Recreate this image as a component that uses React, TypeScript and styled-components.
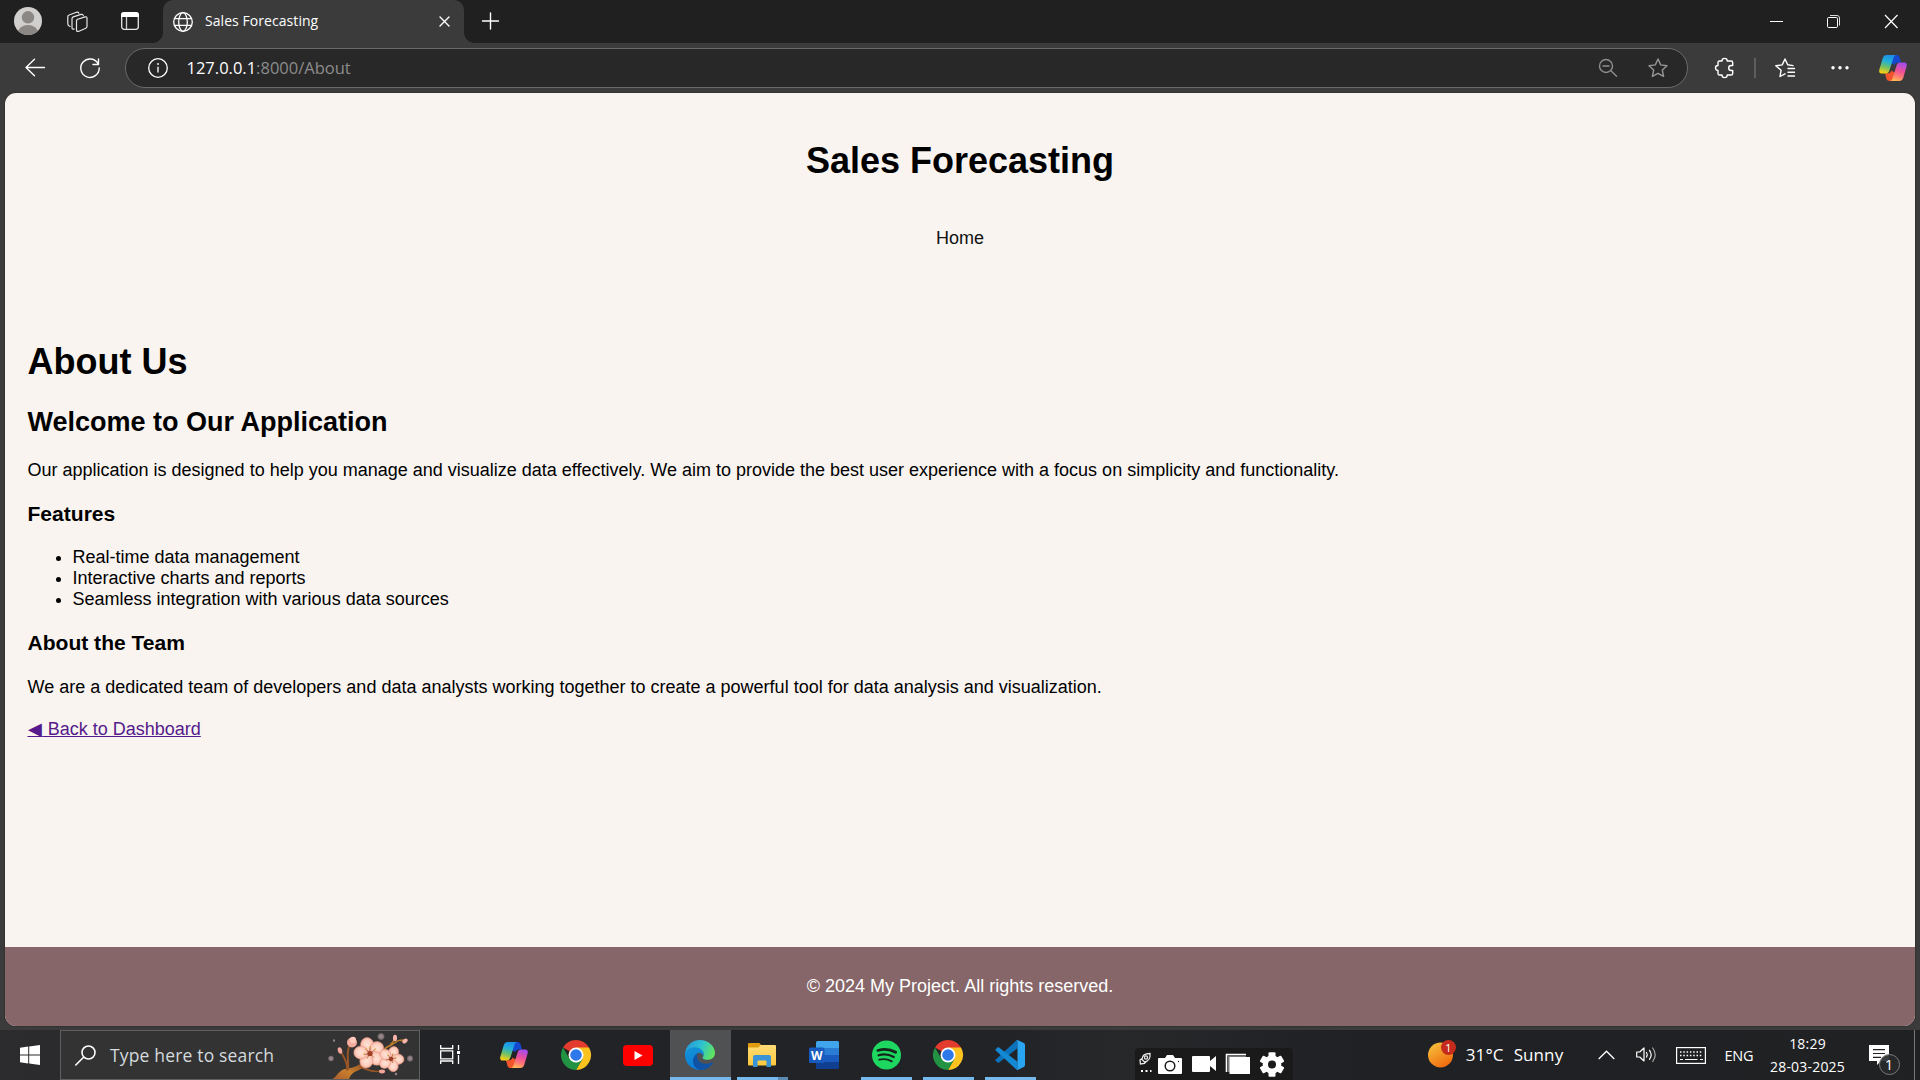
import React from 'react';
import styled, { createGlobalStyle } from 'styled-components';

const GlobalStyle = createGlobalStyle`
  html, body { margin: 0; padding: 0; }
  body { overflow: hidden; background: #3b3b3b; }
  * { box-sizing: border-box; }
`;

const uiFont = '"Open Sans", "Noto Sans", sans-serif';
const pageFont = '"Liberation Sans", Arial, sans-serif';

const Screen = styled.div`
  width: 1920px;
  height: 1080px;
  display: flex;
  flex-direction: column;
  background: #3b3b3b;
  font-family: ${uiFont};
`;

const Svg = styled.svg`
  display: block;
  flex: none;
  overflow: visible;
`;

/* ---------- browser title bar ---------- */

const TitleBar = styled.div`
  height: 43px;
  flex: none;
  display: flex;
  background: #202020;
`;

const TitleTools = styled.div`
  width: 163px;
  display: flex;
  padding: 7px 0 0 14px;
`;

const TitleTool = styled.div<{ $w: number }>`
  width: ${p => p.$w}px;
  flex: none;
`;

const Tab = styled.div`
  position: relative;
  width: 301px;
  display: flex;
  align-items: flex-start;
  padding: 11px 14px 0 10px;
  border-radius: 10px 10px 0 0;
  background: #3b3b3b;
  color: #fff;

  &::before, &::after {
    content: '';
    position: absolute;
    bottom: 0;
    width: 10px;
    height: 10px;
  }
  &::before {
    left: -10px;
    background: radial-gradient(circle at 0 0, transparent 9.5px, #3b3b3b 10px);
  }
  &::after {
    right: -10px;
    background: radial-gradient(circle at 100% 0, transparent 9.5px, #3b3b3b 10px);
  }
`;

const TabTitle = styled.span`
  flex: 1;
  margin: 0 0 0 12px;
  font-size: 14px;
  line-height: 20px;
  letter-spacing: 0.06px;
  white-space: nowrap;
`;

const TabClose = styled.div`
  padding-top: 5px;
`;

const NewTab = styled.div`
  padding: 13px 0 0 18px;
`;

const WindowControls = styled.div`
  margin-left: auto;
  width: 150px;
  display: flex;
  padding-top: 15px;
`;

const WindowControl = styled.div`
  width: 57px;
  flex: none;
`;

/* ---------- browser toolbar ---------- */

const Toolbar = styled.div`
  height: 50px;
  flex: none;
  display: flex;
  align-items: flex-start;
  padding-top: 5px;
  background: #3b3b3b;
`;

const NavButtons = styled.div`
  width: 125px;
  height: 40px;
  display: flex;
  gap: 35px;
  align-items: center;
  padding-left: 25px;
`;

const AddressBar = styled.div`
  width: 1563px;
  height: 40px;
  display: flex;
  align-items: center;
  padding: 0 19px 0 22px;
  border: 1px solid #6a6a6a;
  border-radius: 20px;
  background: #282828;
`;

const Url = styled.span`
  flex: 1;
  margin: -1px 0 0 18.5px;
  font-size: 16.5px;
  line-height: 24px;
  color: #8c8c8c;
  b { font-weight: 400; color: #fff; }
`;

const AddressIcons = styled.div`
  display: flex;
  gap: 30px;
`;

const ToolbarIcons = styled.div`
  flex: 1;
  height: 40px;
  display: flex;
  align-items: center;
  padding-left: 27px;
`;

const Divider = styled.div`
  width: 2px;
  height: 20px;
  margin: 0 19px;
  background: #5e5e5e;
`;

const MoreMenu = styled.div`
  margin: 0 30px 0 36px;
`;

/* ---------- web page ---------- */

const Page = styled.div`
  height: 933px;
  flex: none;
  margin: 0 5px 4px;
  display: flex;
  flex-direction: column;
  border-radius: 11px;
  overflow: hidden;
  background: #f9f4f0;
  color: #000;
  font-family: ${pageFont};
  font-size: 18px;
  line-height: normal;
  box-shadow: 0 0 1px 1px #333;
`;

const PageHeader = styled.header`
  padding: 22.5px;
  text-align: center;
  h1 { font-size: 36px; margin: 0.67em 0; }
`;

const HomeLink = styled.a`
  display: block;
  padding: 22.5px 0;
  color: #111;
`;

const Content = styled.main`
  flex: 1;
  padding: 22.5px;

  h1 { font-size: 36px; margin: 0.67em 0; }
  h2 { font-size: 27px; margin: 0.83em 0; }
  h3 { font-size: 21.06px; margin: 1em 0; }
  p { margin: 1em 0; }
  ul { margin: 1em 0; padding-left: 45px; }
`;

const BackLink = styled.a`
  display: inline-block;
  margin-top: 2px;
  line-height: 23px;
  color: #551a8b;
  text-decoration: underline;
`;

const BackArrow = styled.span`
  letter-spacing: 1.2px;
`;

const PageFooter = styled.footer`
  height: 79px;
  flex: none;
  padding: 11px;
  background: #866668;
  color: #fff;
  text-align: center;
  p { margin: 18px 0; }
`;

/* ---------- taskbar ---------- */

const Taskbar = styled.div`
  height: 50px;
  flex: none;
  display: flex;
  background: linear-gradient(90deg, #2c2c2e 0, #212326 420px, #212326 1000px, #27282a 1120px, #202124 1350px, #202123 100%);
  color: #fff;
`;

const StartButton = styled.div`
  width: 60px;
  padding: 15px 20px;
`;

const SearchBox = styled.div`
  width: 360px;
  height: 50px;
  flex: none;
  display: flex;
  padding-left: 14px;
  border: 1px solid #5f5f5f;
  background: #333;
  overflow: hidden;
`;

const SearchIcon = styled.div`
  padding-top: 14px;
`;

const SearchText = styled.span`
  width: 172px;
  flex: none;
  margin: 11px 0 0 14px;
  font-size: 17.5px;
  line-height: 26px;
  letter-spacing: 0.17px;
  color: #d4dade;
  white-space: nowrap;
`;

const Blossom = styled.div`
  flex: none;
  margin: -3px 0 0 40px;
`;

const TaskView = styled.div`
  width: 64px;
  padding: 15px 0 0 20px;
`;

const AppList = styled.div`
  display: flex;
`;

const AppSlot = styled.div<{ $active?: boolean }>`
  width: 62px;
  height: 50px;
  display: flex;
  flex-direction: column;
  align-items: center;
  background: linear-gradient(${p => (p.$active ? '#505153, #505153' : 'transparent, transparent')}) 0 0 / 61px 100% no-repeat;
`;

const AppIcon = styled.div`
  height: 47px;
  display: flex;
  align-items: center;
  padding: 3px 1px 0 0;
`;

const RunBar = styled.div<{ $w: number; $stack?: boolean }>`
  width: ${p => p.$w}px;
  height: 3px;
  margin-right: 1px;
  border-right: ${p => (p.$stack ? '10px solid #5b8bb3' : '0')};
  background: #76b9ed;
`;

const CaptureTools = styled.div`
  width: 158px;
  height: 32px;
  margin: 18px 0 0 93px;
  border-radius: 4px 4px 0 0;
  background: #1a1a1b;
`;

const Weather = styled.div`
  margin-left: 135px;
  width: 171px;
  display: flex;
  padding-top: 10px;
`;

const WeatherText = styled.span<{ $gap: number }>`
  margin: 2px 0 0 ${p => p.$gap}px;
  font-size: 17px;
  line-height: 26px;
  letter-spacing: 0.1px;
`;

const Tray = styled.div`
  display: flex;
  height: 50px;
`;

const TrayItem = styled.div<{ $w: number; $top: number }>`
  width: ${p => p.$w}px;
  padding-top: ${p => p.$top}px;
`;

const Language = styled(TrayItem)`
  font-size: 14.5px;
  line-height: 20px;
  letter-spacing: -0.2px;
`;

const Clock = styled.div`
  width: 77px;
  padding-top: 2px;
  text-align: center;
  font-size: 14px;
  line-height: 23px;
  letter-spacing: 0.2px;
  white-space: nowrap;
`;

const Notifications = styled.div`
  margin-left: 23px;
  padding-top: 15px;
  position: relative;
  width: 45px;
`;

const NotificationCount = styled.div`
  position: absolute;
  left: 9.5px;
  top: 24px;
  width: 21px;
  height: 21px;
  border: 1px solid #7b7b7b;
  border-radius: 50%;
  background: rgba(40, 41, 43, 0.9);
  font-size: 15px;
  line-height: 19px;
  text-align: center;
`;

const ShowDesktop = styled.div`
  width: 6px;
  border-left: 1px solid #77797a;
`;

const WeatherBadge = styled.div`
  position: absolute;
  left: 13px;
  top: 0;
  width: 15px;
  height: 15px;
  border-radius: 50%;
  background: #c42b1c;
  font-size: 11.5px;
  line-height: 15px;
  text-align: center;
`;

const WeatherIcon = styled.div`
  position: relative;
  width: 28px;
`;

/* ---------- drawings ---------- */

const line = { fill: 'none', stroke: '#fff', strokeWidth: 1.4, strokeLinecap: 'round' as const, strokeLinejoin: 'round' as const };

const Copilot = ({ id }: { id: string }) => (
  <Svg width="28" height="26" viewBox="0 0 28 26">
    <defs>
      <linearGradient id={`${id}l`} x1="0.6" y1="0" x2="0.35" y2="1">
        <stop offset="0" stopColor="#1b8fe8" /><stop offset="0.35" stopColor="#22b0d8" />
        <stop offset="0.65" stopColor="#6cc06a" /><stop offset="1" stopColor="#ffd011" />
      </linearGradient>
      <linearGradient id={`${id}r`} x1="0.7" y1="0" x2="0.4" y2="1">
        <stop offset="0" stopColor="#a24cf0" /><stop offset="0.45" stopColor="#ee5098" />
        <stop offset="0.75" stopColor="#ff7c72" /><stop offset="1" stopColor="#ffb657" />
      </linearGradient>
    </defs>
    <path d="M13 0h4.500c1.800 0 2.700 1 3.200 2.800L22 7.500h-3c-2 0-3 1-3.600 2.600L12 8z" fill="#1448cf" />
    <path d="M15 26h-4.500c-1.800 0-2.700-1-3.200-2.800L6 18.200h3c2 0 3-1 3.600-2.600L16 18z" fill="#f2552c" />
    <path d="M7.800 0h9c-1.300.5-1.900 1.500-2.400 3l-4 12.600c-.7 2-1.600 2.900-3.600 2.900H2.500C.5 18.500-.2 16.700.3 14.700L3.800 3C4.500 1 5.800 0 7.800 0z" fill={`url(#${id}l)`} />
    <path d="M20.200 26h-9c1.300-.5 1.900-1.500 2.400-3l4-12.600c.7-2 1.600-2.900 3.600-2.900h4.300c2 0 2.700 1.800 2.200 3.800L24.200 23c-.7 2-2 3-4 3z" fill={`url(#${id}r)`} />
  </Svg>
);

const Chrome = () => (
  <Svg width="30" height="30" viewBox="0 0 48 48">
    <path d="M24 24L3.200 12A24 24 0 0 1 44.800 12z" fill="#e33b2e" />
    <path d="M24 12h20.800A24 24 0 0 1 24 48l10.400-18z" fill="#fcc31e" />
    <path d="M3.200 12A24 24 0 0 0 24 48l10.400-18H13.600z" fill="#229342" />
    <circle cx="24" cy="24" r="12" fill="#fff" />
    <circle cx="24" cy="24" r="9.300" fill="#2f78ea" />
  </Svg>
);

const Youtube = () => (
  <Svg width="30" height="21" viewBox="0 0 30 21">
    <rect width="30" height="21" rx="4" fill="#f00" />
    <path d="M11.500 6v9l8-4.500z" fill="#fff" />
  </Svg>
);

const Edge = () => (
  <Svg width="30" height="30" viewBox="0 0 30 30">
    <defs>
      <linearGradient id="edgeTop" x1="0" y1="0.3" x2="1" y2="0.6">
        <stop offset="0" stopColor="#2698dc" /><stop offset="0.5" stopColor="#2fc2cf" /><stop offset="1" stopColor="#62e65a" />
      </linearGradient>
      <linearGradient id="edgeSide" x1="0" y1="0" x2="0.4" y2="1">
        <stop offset="0" stopColor="#1596d6" /><stop offset="1" stopColor="#0b7bd6" />
      </linearGradient>
    </defs>
    <path d="M0 14C.5 6 6.800 0 15 0s15 6.200 15 12.800c0 4.400-3.400 7-7.400 7-3 0-5-1-5-2.100 0-1 1-1.300 1-3.500 0-2.800-3-5-7-5C6.800 9.200 2.500 11 0 14z" fill="url(#edgeTop)" />
    <path d="M0 15c0-4.500 4.500-7.800 9.800-7.800 5 0 8.800 3 8.800 6.600 0 .8-.2 1.500-.6 2.100-.8-2.200-2.300-3.200-3.700-3.200-2.300 0-4.300 2.500-4.300 6.300 0 5 3.600 9.500 8 10.500-1 .3-2 .5-3 .5C6.700 30 0 23.300 0 15z" fill="url(#edgeSide)" />
    <path d="M12.500 13c-3.200 2.500-4.800 5-4.500 8.500C8.400 26 12 30 16 30c5 0 9.500-3 11.800-7 .3-.6-.2-1-.7-.7-5.500 2.900-13.600 1.700-14.800-4.800-.3-1.700 0-3.400.2-4.500z" fill="#1053a5" />
  </Svg>
);

const Folder = () => (
  <Svg width="28" height="24" viewBox="0 0 28 24">
    <defs><linearGradient id="folder" x1="0" y1="0" x2="0" y2="1"><stop offset="0" stopColor="#ffdc77" /><stop offset="1" stopColor="#ffc83a" /></linearGradient></defs>
    <path d="M0 1q0-1 1-1h10.500l1.500 2v5H0z" fill="#e09c10" />
    <path d="M0 4.500h10.500l2-2.500H27q1 0 1 1v18.500q0 1-1 1H1q-1 0-1-1z" fill="url(#folder)" />
    <path d="M5 24V14q0-2 2-2h14q2 0 2 2v10h-4.500v-5.500q0-1-1-1h-7q-1 0-1 1V24z" fill="#3a93d6" />
  </Svg>
);

const Word = () => (
  <Svg width="30" height="28" viewBox="0 0 30 28">
    <path d="M7 1.500Q7 0 8.500 0h20Q30 0 30 1.500V7H7z" fill="#41a5ee" />
    <path d="M7 7h23v7H7z" fill="#2b7cd3" />
    <path d="M7 14h23v7H7z" fill="#185abd" />
    <path d="M7 21h23v5.500q0 1.500-1.500 1.500h-20Q7 28 7 26.500z" fill="#103f91" />
    <rect y="6.500" width="15.500" height="15.500" rx="1.500" fill="#185abd" />
    <text x="7.700" y="18.500" textAnchor="middle" fontFamily={uiFont} fontSize="12" fontWeight="700" fill="#fff">W</text>
  </Svg>
);

const Spotify = () => (
  <Svg width="29" height="30" viewBox="0 0 30 30">
    <circle cx="15" cy="15" r="15" fill="#1ed760" />
    <g fill="none" stroke="#15251b" strokeLinecap="round">
      <path d="M6 10.300c6-1.800 13-1.200 18.500 1.900" strokeWidth="2.800" />
      <path d="M6.800 15.300c5.300-1.500 11-.9 15.700 1.800" strokeWidth="2.300" />
      <path d="M7.500 19.900c4.500-1.200 9-.6 13 1.700" strokeWidth="1.900" />
    </g>
  </Svg>
);

const VSCode = () => (
  <Svg width="30" height="30" viewBox="0 0 30 30">
    <path d="M1 19.200c-.8.700-.8 1.200 0 1.900l1.500 1.400c.5.400 1 .4 1.600 0L22.500 8.300V.500c-.8-.1-1.300.1-2 .7z" fill="#0b72bb" />
    <path d="M1 10.800c-.8-.7-.8-1.200 0-1.900l1.500-1.400c.5-.4 1-.4 1.600 0l18.400 14.200v7.800c-.8.100-1.300-.1-2-.7z" fill="#1489d3" />
    <path d="M22.500 0l6.300 3c.8.400 1.200 1 1.200 1.900v20.200c0 .9-.4 1.500-1.200 1.900l-6.300 3c-.8 0-1.500-.2-2-.7 1 .6 2 .1 2-1.100V1.800c0-1.200-1-1.700-2-1.100.5-.5 1.200-.7 2-.7z" fill="#2aa5f2" />
  </Svg>
);

const petals = (cx: number, cy: number, d: number, rx: number, ry: number, turn: number) =>
  [0, 72, 144, 216, 288].map(a => (
    <ellipse key={a} cx={cx} cy={cy - d} rx={rx} ry={ry} fill="url(#petal)" stroke="#e89a88" strokeWidth="0.5" transform={`rotate(${a + turn} ${cx} ${cy})`} />
  ));

const BlossomArt = () => (
  <Svg width="100" height="52" viewBox="0 0 100 52">
    <defs>
      <radialGradient id="petal"><stop offset="0" stopColor="#ffe3d6" /><stop offset="0.65" stopColor="#fdd0c0" /><stop offset="1" stopColor="#f6ae9c" /></radialGradient>
      <linearGradient id="bark" x1="0" y1="1" x2="1" y2="0"><stop offset="0" stopColor="#a85a2c" /><stop offset="0.5" stopColor="#c9802e" /><stop offset="1" stopColor="#8a4a22" /></linearGradient>
      <radialGradient id="bokeh"><stop offset="0" stopColor="#a08d90" /><stop offset="0.6" stopColor="#85777a" /><stop offset="1" stopColor="#333" /></radialGradient>
    </defs>
    <circle cx="59" cy="8.500" r="4" fill="url(#bokeh)" />
    <circle cx="9" cy="30.500" r="3.300" fill="url(#bokeh)" />
    <circle cx="88" cy="30.500" r="3.600" fill="url(#bokeh)" />
    <circle cx="12" cy="12.500" r="1.600" fill="url(#bokeh)" />
    <circle cx="74" cy="46" r="1.800" fill="url(#bokeh)" />
    <path d="M9 52c6-3 8-10 14-11 8-1 12-3 17-6l4 3c-6 4-11 5-14 8-2 2-2 4-4 6z" fill="url(#bark)" />
    <g fill="none" stroke="#9a5626" strokeLinecap="round">
      <path d="M25 42c1-7-3-13-6-18" strokeWidth="1.800" />
      <path d="M26 41c1-8-2-14 1-22" strokeWidth="2" />
      <path d="M38 39c7 2 12 6 21 4" strokeWidth="1.600" />
      <path d="M60 25c3-8 10-7 14-11 3-3 5-1 8-2M69 16c2-1 3-4 4-6" stroke="#b9792a" strokeWidth="1.700" />
    </g>
    <ellipse cx="30" cy="14.500" rx="5" ry="5" fill="#f5aa9e" />
    <ellipse cx="31" cy="12" rx="3" ry="3.200" fill="#ffc9bd" />
    <ellipse cx="18" cy="22.500" rx="2.200" ry="3.300" fill="#f3a79d" transform="rotate(-15 18 22.500)" />
    <ellipse cx="60" cy="43.500" rx="3" ry="1.900" fill="#f5a597" />
    <ellipse cx="73" cy="10" rx="2" ry="3.200" fill="#f9b4a8" />
    <ellipse cx="83" cy="13" rx="3" ry="2" fill="#f9b4a8" transform="rotate(-35 83 13)" />
    {petals(47.5, 25, 8.500, 6.600, 7.200, -15)}
    {petals(69, 31, 7, 5.200, 6, 20)}
    <path d="M48 25.500l-4-4m4 4l0-6m0 6l5-4m-5 4l-6 1m6-1l4 4m-4-4l-3 5" stroke="#a85a28" strokeWidth="0.800" />
    <circle cx="48" cy="25.500" r="2.600" fill="#9e3f28" />
    <path d="M69 31l-3-4m3 4l2-5m-2 5l5-1m-5 1l-5 1m5-1l2 4" stroke="#a85a28" strokeWidth="0.800" />
    <circle cx="69" cy="31" r="2.200" fill="#9e3f28" />
    <g fill="#d9a93a">
      <circle cx="44" cy="21" r="0.800" /><circle cx="48" cy="19" r="0.800" /><circle cx="53.500" cy="21" r="0.800" /><circle cx="42" cy="26" r="0.800" />
      <circle cx="66" cy="27" r="0.700" /><circle cx="71" cy="26" r="0.700" /><circle cx="74" cy="30" r="0.700" />
    </g>
  </Svg>
);

const CaptureArt = () => (
  <Svg width="158" height="32" viewBox="0 0 158 32">
    <g fill="none" stroke="#e6e6e6" strokeWidth="1.300">
      <path d="M7 11.500C7 7.500 10 5.500 15 5.500c.5 4.500-1.500 8-5.500 8.500zM7 10.500l-2 1.500.5 4 4-.5 1.500-2" />
      <circle cx="11" cy="9.500" r="1.600" />
    </g>
    <path d="M6 22h2v2H6zM10.500 22h2v2h-2zM15 22h1.500v2H15z" fill="#fff" />
    <path d="M23 11q0-1 1-1h6l2-3h6l2 3h6q1 0 1 1v14q0 1-1 1H24q-1 0-1-1z" fill="#fff" />
    <circle cx="35" cy="18" r="4.800" fill="none" stroke="#1a1a1b" strokeWidth="1.500" />
    <circle cx="43.500" cy="13.500" r="0.700" fill="#1a1a1b" />
    <path d="M57 9q0-1 1-1h16q1 0 1 1v4l6-5v15l-6-5v5q0 1-1 1H58q-1 0-1-1z" fill="#fff" />
    <path d="M91.500 24V6.500H111" fill="none" stroke="#fff" strokeWidth="1.600" />
    <path d="M93 7.500h18V9H95v15h-2z" fill="#777" />
    <rect x="94.500" y="9" width="20.500" height="17" fill="#fff" />
    <g transform="translate(137 16.500)">
      {[0, 60, 120].map(a => <rect key={a} x="-3.500" y="-12.300" width="7" height="24.600" rx="1" fill="#fff" transform={`rotate(${a})`} />)}
      <circle r="9.300" fill="#fff" />
      <circle r="4" fill="#1a1a1b" />
    </g>
  </Svg>
);

const starPath = 'M10 1l2.700 5.900 6.300.8-4.700 4.300 1.300 6.400L10 15.300l-5.600 3.100 1.300-6.400L1 7.700l6.300-.8z';

/* ---------- screen ---------- */

export default function App() {
  return (
    <Screen>
      <GlobalStyle />
      <TitleBar>
        <TitleTools>
          <TitleTool $w={53}>
            <Svg width="28" height="28" viewBox="0 0 28 28">
              <defs><clipPath id="avatar"><circle cx="14" cy="14" r="14" /></clipPath></defs>
              <circle cx="14" cy="14" r="14" fill="#d1cfcd" />
              <g fill="#8b8785" clipPath="url(#avatar)"><circle cx="14" cy="10.300" r="6.200" /><ellipse cx="14" cy="25.500" rx="10" ry="7.500" /></g>
            </Svg>
          </TitleTool>
          <TitleTool $w={54}>
            <Svg width="22" height="28" viewBox="0 0 22 28">
              <g {...line} strokeWidth="1.200" stroke="#e6e6e6">
                <path d="M9.500 13.800q0-1.200 1.200-1.600l7.300-2.300q2-.5 2 1.300v8.300q0 1.200-1.200 1.700l-6.800 3q-2.500.9-2.500-1.200z" />
                <path d="M7.300 22q-2.300.7-2.300-1.300v-9q0-1.400 1.300-1.800l7.700-2.500q2-.5 2.300 1.300" />
                <path d="M3 19.500Q.8 18.500.8 17V9.800q0-1.400 1.300-1.800l7.400-2.700q1.800-.5 2.400.9" />
              </g>
            </Svg>
          </TitleTool>
          <Svg width="18" height="28" viewBox="0 0 18 28">
            <rect x="0.700" y="6" width="16.600" height="16.300" rx="2.500" fill="none" stroke="#e8e8e8" strokeWidth="1.300" />
            <path d="M0 10V8q0-3 3-3h12q3 0 3 3v2z" fill="#fff" />
            <path d="M5.500 10v12" stroke="#ccc" strokeWidth="1.300" />
          </Svg>
        </TitleTools>
        <Tab>
          <Svg width="20" height="21" viewBox="0 0 20 21">
            <g {...line} strokeWidth="1.300"><circle cx="10" cy="11" r="9.300" /><ellipse cx="10" cy="11" rx="4.300" ry="9.300" /><path d="M1.500 7.700h17M1.500 14.300h17" /></g>
          </Svg>
          <TabTitle>Sales Forecasting</TabTitle>
          <TabClose><Svg width="11" height="11" viewBox="0 0 11 11"><path {...line} d="M1 1l9 9M10 1l-9 9" /></Svg></TabClose>
        </Tab>
        <NewTab><Svg width="18" height="17" viewBox="0 0 18 17"><path {...line} d="M.5 8h16M8.500 0v16" /></Svg></NewTab>
        <WindowControls>
          <WindowControl><Svg width="13" height="13" viewBox="0 0 13 13"><path d="M0 6.500h13" stroke="#fff" /></Svg></WindowControl>
          <WindowControl>
            <Svg width="13" height="13" viewBox="0 0 13 13"><g fill="none" stroke="#fff"><rect x="0.500" y="2.500" width="10" height="10" rx="1.200" /><path d="M3 .5h7q2.500 0 2.500 2.500v7.500" stroke="#ddd" /></g></Svg>
          </WindowControl>
          <WindowControl><Svg width="13" height="13" viewBox="0 0 13 13"><path d="M1 0l12.500 13M13.500 0L1 13" stroke="#fff" strokeWidth="1.200" /></Svg></WindowControl>
        </WindowControls>
      </TitleBar>

      <Toolbar>
        <NavButtons>
          <Svg width="20" height="20" viewBox="0 0 20 20"><path {...line} d="M9.500 1.300L1 9.500l8.500 8.200M1 9.500h18.500" /></Svg>
          <Svg width="20" height="20" viewBox="0 0 20 20"><path {...line} d="M18.200 6A9.200 9.200 0 1 0 19.200 10M18.500 1v5.500H13" /></Svg>
        </NavButtons>
        <AddressBar>
          <Svg width="20" height="20" viewBox="0 0 20 20"><circle {...line} cx="10" cy="10" r="9.300" strokeWidth="1.300" /><path d="M10 8.800v5.700" stroke="#ddd" strokeWidth="1.600" /><circle cx="10" cy="6" r="1.100" fill="#ddd" /></Svg>
          <Url><b>127.0.0.1</b>:8000/About</Url>
          <AddressIcons>
            <Svg width="20" height="20" viewBox="0 0 20 20"><path {...line} stroke="#8e8e8e" d="M14.500 8A6.500 6.500 0 1 1 1.500 8a6.500 6.500 0 0 1 13 0zM13 12.700l5.500 5.500M5 8h6" /></Svg>
            <Svg width="20" height="20" viewBox="0 0 20 20"><path {...line} stroke="#959595" d={starPath} /></Svg>
          </AddressIcons>
        </AddressBar>
        <ToolbarIcons>
          <Svg width="20" height="20" viewBox="0 0 20 20">
            <path {...line} strokeWidth="1.400" d="M7 3a2.600 2.600 0 0 1 5.200 0h3.900q1.600 0 1.600 1.600v2.900h-1.500a2.500 2.500 0 0 0 0 5h1.500v2.900q0 1.600-1.600 1.600h-3.900a2.600 2.600 0 0 1-5.200 0H4.600q-1.600 0-1.600-1.600v-2.900a2.500 2.500 0 0 1 0-5V4.600Q3 3 4.600 3z" />
          </Svg>
          <Divider />
          <Svg width="20" height="20" viewBox="0 0 20 20"><path {...line} d="M5 18.500l1.100-6.300L.8 7.800l6.400-.9L10 1l2.700 5.700 5.300.9M5 18.500l5-2.700M13 10.500h6.500M13 14.300h6.500M13 18h6.500" /></Svg>
          <MoreMenu>
            <Svg width="18" height="20" viewBox="0 0 18 20"><g fill="#fff"><circle cx="2" cy="9.700" r="1.700" /><circle cx="9" cy="9.700" r="1.700" /><circle cx="16" cy="9.700" r="1.700" /></g></Svg>
          </MoreMenu>
          <Copilot id="tool" />
        </ToolbarIcons>
      </Toolbar>

      <Page>
        <PageHeader>
          <h1>Sales Forecasting</h1>
          <HomeLink>Home</HomeLink>
        </PageHeader>
        <Content>
          <h1>About Us</h1>
          <h2>Welcome to Our Application</h2>
          <p>Our application is designed to help you manage and visualize data effectively. We aim to provide the best user experience with a focus on simplicity and functionality.</p>
          <h3>Features</h3>
          <ul>
            <li>Real-time data management</li>
            <li>Interactive charts and reports</li>
            <li>Seamless integration with various data sources</li>
          </ul>
          <h3>About the Team</h3>
          <p>We are a dedicated team of developers and data analysts working together to create a powerful tool for data analysis and visualization.</p>
          <BackLink><BackArrow>◀</BackArrow> Back to Dashboard</BackLink>
        </Content>
        <PageFooter><p>© 2024 My Project. All rights reserved.</p></PageFooter>
      </Page>

      <Taskbar>
        <StartButton>
          <Svg width="20" height="20" viewBox="0 0 20 20"><path fill="#fff" d="M0 2.800l8.200-1.200v7.900H0zM9.200 1.400L20 0v9.500H9.200zM0 10.500h8.200v7.900L0 17.200zM9.200 10.500H20V20L9.200 18.600z" /></Svg>
        </StartButton>
        <SearchBox>
          <SearchIcon><Svg width="21" height="21" viewBox="0 0 21 21"><path {...line} strokeWidth="1.600" d="M20 7.500a6.500 6.500 0 1 1-13 0 6.500 6.500 0 0 1 13 0zM8.800 12L.8 20" /></Svg></SearchIcon>
          <SearchText>Type here to search</SearchText>
          <Blossom><BlossomArt /></Blossom>
        </SearchBox>
        <TaskView>
          <Svg width="20" height="20" viewBox="0 0 20 20"><g fill="none" stroke="#fff" strokeWidth="1.300"><path d="M.7 0v3.500h12V0M.7 19v-3h12v3M.7 5.800h12v8H.7zM18.500 0v5M18.500 10v9" /><path d="M17 6h3v3h-3z" fill="#fff" stroke="none" /></g></Svg>
        </TaskView>
        <AppList>
          <AppSlot><AppIcon><Copilot id="app" /></AppIcon></AppSlot>
          <AppSlot><AppIcon><Chrome /></AppIcon></AppSlot>
          <AppSlot><AppIcon><Youtube /></AppIcon></AppSlot>
          <AppSlot $active><AppIcon><Edge /></AppIcon><RunBar $w={61} /></AppSlot>
          <AppSlot><AppIcon><Folder /></AppIcon><RunBar $w={51} $stack /></AppSlot>
          <AppSlot><AppIcon><Word /></AppIcon></AppSlot>
          <AppSlot><AppIcon><Spotify /></AppIcon><RunBar $w={51} /></AppSlot>
          <AppSlot><AppIcon><Chrome /></AppIcon><RunBar $w={51} /></AppSlot>
          <AppSlot><AppIcon><VSCode /></AppIcon><RunBar $w={51} /></AppSlot>
        </AppList>
        <CaptureTools><CaptureArt /></CaptureTools>
        <Weather>
          <WeatherIcon>
            <Svg width="25" height="28" viewBox="0 0 25 28">
              <defs><linearGradient id="sun" x1="0.200" y1="0" x2="0.800" y2="1"><stop offset="0" stopColor="#f5bf3a" /><stop offset="1" stopColor="#f0650c" /></linearGradient></defs>
              <circle cx="12.500" cy="15" r="12.500" fill="url(#sun)" />
            </Svg>
            <WeatherBadge>1</WeatherBadge>
          </WeatherIcon>
          <WeatherText $gap={10}>31°C</WeatherText>
          <WeatherText $gap={10}>Sunny</WeatherText>
        </Weather>
        <Tray>
          <TrayItem $w={38} $top={20}><Svg width="17" height="10" viewBox="0 0 17 10"><path d="M.7 9L8.500 1.200 16.300 9" fill="none" stroke="#fff" strokeWidth="1.300" /></Svg></TrayItem>
          <TrayItem $w={40} $top={16}>
            <Svg width="21" height="18" viewBox="0 0 21 18"><g {...line} strokeWidth="1.200"><path d="M.7 6h3L8 2v13l-4.300-4h-3z" /><path d="M10.500 6.500q1.500 2.300 0 4.600M13.500 4.300q3.300 4.500 0 9" /><path d="M16.700 2q5 6.800 0 13.500" stroke="#aaa" /></g></Svg>
          </TrayItem>
          <TrayItem $w={48.5} $top={17}>
            <Svg width="30" height="17" viewBox="0 0 30 17"><rect x="0.600" y="0.600" width="28.800" height="15.800" fill="none" stroke="#fff" strokeWidth="1.200" /><path d="M4 5h23M4 8.500h23" stroke="#fff" strokeWidth="1.300" strokeDasharray="1.500 1.800" /><path d="M4 12.500h3M9 12.500h12.500M24 12.500h3" stroke="#fff" strokeWidth="1.200" /></Svg>
          </TrayItem>
          <Language $w={44.5} $top={16}>ENG</Language>
          <Clock>18:29<br />28-03-2025</Clock>
          <Notifications>
            <Svg width="20" height="20" viewBox="0 0 20 20"><path d="M0 0h20v16H12l-4 4v-4H0z" fill="#fff" /><path d="M4 4.700h12M4 8.500h12M4 12.300h8" stroke="#202123" strokeWidth="1.200" /></Svg>
            <NotificationCount>1</NotificationCount>
          </Notifications>
          <ShowDesktop />
        </Tray>
      </Taskbar>
    </Screen>
  );
}
